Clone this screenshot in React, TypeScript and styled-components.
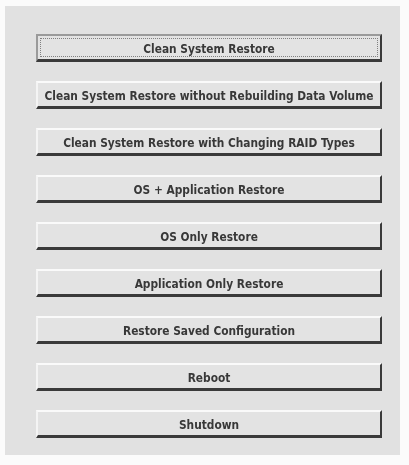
import styled, { createGlobalStyle } from "styled-components";

const GlobalStyle = createGlobalStyle`
  html, body {
    margin: 0;
    padding: 0;
    background: #fbfbfb;
  }
  body {
    font-family: "DejaVu Sans", "Liberation Sans", sans-serif;
  }
`;

const Page = styled.div`
  width: 409px;
  height: 465px;
  padding: 6px 9px 10px 5px;
  box-sizing: border-box;
`;

const Panel = styled.div`
  height: 100%;
  background: #e1e1e1;
  box-sizing: border-box;
  padding: 28px 18px 0 31px;
  display: flex;
  flex-direction: column;
  gap: 19px;
`;

const Button = styled.button<{ $focused?: boolean }>`
  position: relative;
  height: 28px;
  width: 100%;
  box-sizing: border-box;
  margin: 0;
  padding: 2px 2px 0;
  background: #e3e3e3;
  border-style: solid;
  border-width: 2px 2px 3px 2px;
  border-color: #fafafa #3a3a3a #3a3a3a #f4f4f4;
  font-family: "DejaVu Sans Condensed", "DejaVu Sans", sans-serif;
  font-stretch: condensed;
  font-weight: bold;
  font-size: 11.8px;
  color: #383838;
  white-space: nowrap;
  cursor: pointer;
  filter: blur(0.35px);

  ${({ $focused }) =>
    $focused &&
    `
    border-color: #9a9a9a #3a3a3a #3a3a3a #9a9a9a;
    &::after {
      content: "";
      position: absolute;
      inset: 2px;
      border: 1px dotted #808080;
    }
  `}
`;

const items = [
  "Clean System Restore",
  "Clean System Restore without Rebuilding Data Volume",
  "Clean System Restore with Changing RAID Types",
  "OS + Application Restore",
  "OS Only Restore",
  "Application Only Restore",
  "Restore Saved Configuration",
  "Reboot",
  "Shutdown",
];

export default function App() {
  return (
    <>
      <GlobalStyle />
      <Page>
        <Panel>
          {items.map((label, i) => (
            <Button key={label} $focused={i === 0}>
              {label}
            </Button>
          ))}
        </Panel>
      </Page>
    </>
  );
}
